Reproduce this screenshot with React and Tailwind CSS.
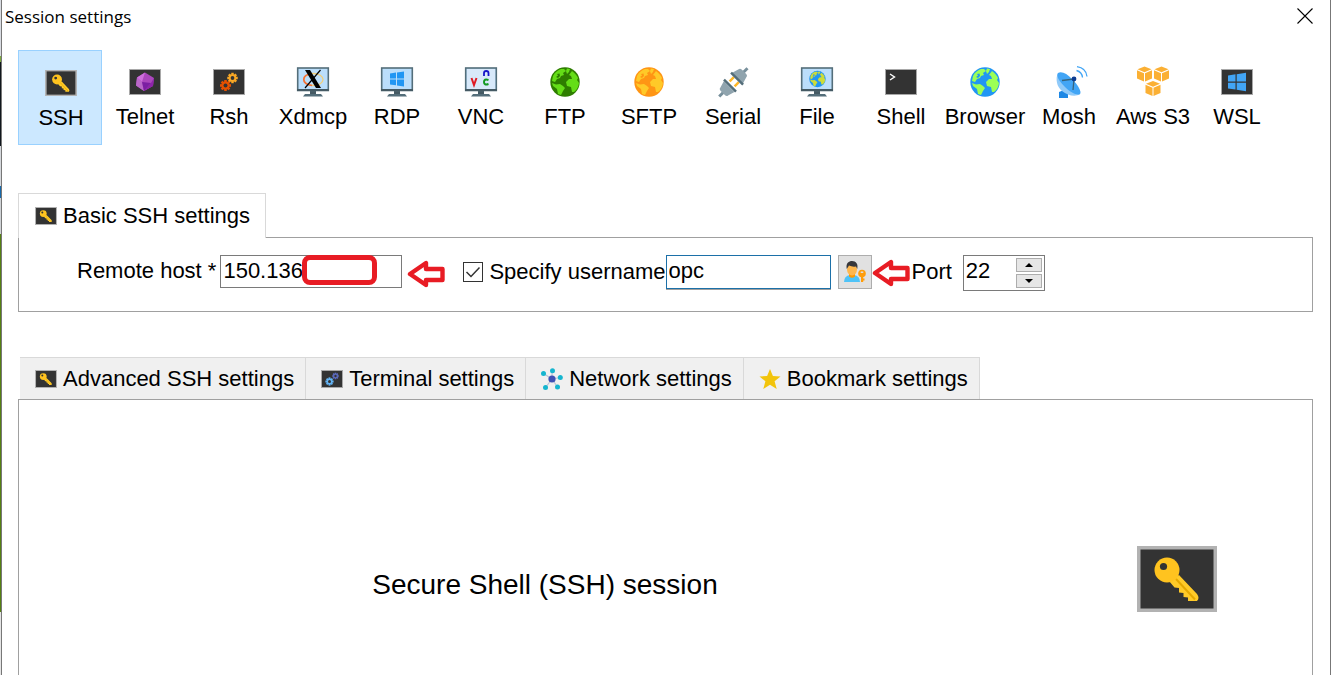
import React, { useState } from "react";

const KEY_SHAFT =
  "M42 29L60 48Q63 52 60 55L51 55L51 51.500L46.500 51L46.500 47L42 46.500L42 42L37.500 41.500L32 35Z";

function KeyIcon({ className }) {
  return (
    <svg className={className} viewBox="0 0 80 66" aria-hidden="true">
      <rect x="1.500" y="1.500" width="77" height="63" fill="#333" stroke="#b2b2b2" strokeWidth="4" />
      <path d={KEY_SHAFT} fill="#ffca28" />
      <path d="M39 33L58 53.500" stroke="#e5a800" strokeWidth="2" fill="none" />
      <circle cx="30" cy="24" r="12.500" fill="#ffc31f" />
      <circle cx="26.500" cy="20.500" r="3.600" fill="#333" />
    </svg>
  );
}

function Screen() {
  return <rect x="0.500" y="3.500" width="31" height="25" fill="#333" stroke="#a8a8a8" />;
}

function Monitor() {
  return (
    <>
      <path d="M13 25h6v4h-6z" fill="#455a64" />
      <path d="M8 28h16l2 2.500H6z" fill="#546e7a" />
      <rect x="0.700" y="2" width="30.600" height="22.500" fill="#bbdefb" stroke="#546e7a" strokeWidth="1.600" />
      <path d="M0 23h32v2H0z" fill="#455a64" />
    </>
  );
}

function Globe({ sea, land }) {
  return (
    <g>
      <circle cx="16" cy="16" r="14.700" fill={sea} />
      <path
        d="M4 10C6 6 9 4 12 3L15 3L17 5L14 7L15 9L12 10L11 12L8 13L6 16L3 15ZM3 17L7 18.500L11 18L14 20L16 22L14 25L12 29L9 28L8 23L4 20ZM18 2.500L21 3L20 6L18 8L17 5ZM23 5C26 7 28 10 29 12L28 14L30 17C29.500 21 28 24 25 26L23 26L22 21L18 20L17 16L20 13L23 13L22 10L20 9Z"
        fill={land}
      />
      <path d="M7 11L9 9.500L8 8L10.500 7.500L11 10L9 12Z" fill={sea} />
    </g>
  );
}

function Gear({ x, y, s, color, hole = "#333" }) {
  return (
    <g transform={`translate(${x} ${y}) scale(${s})`}>
      {[0, 45, 90, 135].map((a) => (
        <rect key={a} x="-1.300" y="-5.500" width="2.600" height="11" fill={color} transform={`rotate(${a})`} />
      ))}
      <circle r="4" fill={color} />
      <circle r="2" fill={hole} />
    </g>
  );
}

const Cube = ({ x, y }) => (
  <g transform={`translate(${x} ${y})`} fill="#fbb034">
    <path d="M7.500 0L14.500 2.800L7.500 5.800L0.500 2.800Z" />
    <path d="M0 3.800L7 6.800V15L0 12Z" />
    <path d="M15 3.800L8 6.800V15L15 12Z" />
  </g>
);

const drawings = {
  Telnet: (
    <>
      <Screen />
      <path d="M16 6.500L25 12L24 20L15 25L7 19.500L8 11.500Z" fill="#ab47bc" />
      <path d="M16 6.500L8 11.500L13 16Z" fill="#ce6fdc" />
      <path d="M8 11.500L13 16L15 25L7 19.500Z" fill="#ba68c8" />
      <path d="M25 12L22 17L15 25L24 20Z" fill="#8e24aa" />
      <path d="M13 16L22 17L15 25Z" fill="#7b1fa2" />
    </>
  ),
  Rsh: (
    <>
      <Screen />
      <Gear x={19.5} y={12} s={0.95} color="#f9a825" />
      <Gear x={12.5} y={19.5} s={1} color="#e65100" />
    </>
  ),
  Xdmcp: (
    <>
      <Monitor />
      <ellipse cx="16.500" cy="13.500" rx="9.500" ry="6" fill="none" stroke="#f3cf7a" strokeWidth="1.300" />
      <path d="M15 7.500C4 9 4 18 15 19.500" fill="none" stroke="#f2703a" strokeWidth="1.700" />
      <path d="M8 4h5l11 18h-5z" fill="#000" />
      <path d="M23.500 4L8 22" stroke="#000" strokeWidth="1.200" />
    </>
  ),
  RDP: (
    <>
      <Monitor />
      <path d="M9 7.500L15 6.600V12.500H9ZM16 6.500L23 5.500V12.500H16ZM9 13.500H15V19.300L9 18.500ZM16 13.500H23V20.500L16 19.500Z" fill="#2196f3" />
    </>
  ),
  VNC: (
    <>
      <Monitor />
      <rect x="2" y="3" width="28" height="20" fill="#d8e9fa" />
      <path d="M6.500 12L9 19L11.500 12" fill="none" stroke="#e01b24" strokeWidth="2" />
      <path d="M19 10V7Q19 5 21.200 5Q23.500 5 23.500 7V10" fill="none" stroke="#1515c8" strokeWidth="1.800" />
      <path d="M23.500 14Q19 12.500 19 16Q19 19.500 23.500 18" fill="none" stroke="#129a20" strokeWidth="2" />
    </>
  ),
  FTP: <Globe sea="#2e7d00" land="#64dd17" />,
  SFTP: <Globe sea="#ff9514" land="#ffc928" />,
  Serial: (
    <g transform="rotate(45 16 16)">
      <path d="M15 -4h3v6h-3zM15 30h3v6h-3z" fill="#78909c" />
      <path d="M11 3Q11 1 14 1H19Q22 1 22 3L24 10H9ZM9 22H24L22 29Q22 31 19 31H14Q11 31 11 29Z" fill="#90a4ae" />
      <path d="M12 12h2.500v6h-2.500zM19 12h2.500v6h-2.500z" fill="#ffb82a" />
      <path d="M8 9.500h17v2.500H8zM8 19.500h17v2.500H8z" fill="#546e7a" />
    </g>
  ),
  File: (
    <>
      <Monitor />
      <g transform="translate(7.500 4) scale(0.56)">
        <Globe sea="#2196f3" land="#cddc39" />
      </g>
    </>
  ),
  Shell: (
    <>
      <Screen />
      <path d="M5 8L9.500 11L5 14" fill="none" stroke="#fff" strokeWidth="1.400" />
    </>
  ),
  Browser: <Globe sea="#2196f3" land="#9cff57" />,
  Mosh: (
    <>
      <path d="M6 26L11 24L15 28V32H6Z" fill="#1e88e5" />
      <path d="M5 7C2 13 4 21 9 25C15 30 23 31 27 28Z" fill="#90caf9" />
      <path d="M5 7C9 5 14 8 19 13C25 19 29 26 27 28C24 30 17 26 12 21C6 15 3 10 5 7Z" fill="#42a5f5" />
      <path d="M9 14.500L21 13L20 24" fill="none" stroke="#37647c" strokeWidth="1.300" />
      <circle cx="21" cy="13" r="2.400" fill="#0d3c91" />
      <path d="M23.500 4.500Q29 6 29.500 11.500M24 0.700Q33 2 34 10.500" fill="none" stroke="#42a5f5" strokeWidth="1.300" />
    </>
  ),
  "Aws S3": (
    <>
      <Cube x={0} y={0.5} />
      <Cube x={17} y={0.5} />
      <Cube x={8.5} y={15} />
    </>
  ),
  WSL: (
    <>
      <Screen />
      <path d="M7 9.500L14.500 8.300V15.500H7ZM15.700 8.200L25 6.800V15.500H15.700ZM7 16.700H14.500V23.500L7 22.500ZM15.700 16.700H25V25.200L15.700 23.800Z" fill="#42a5f5" />
    </>
  ),
};

const sessionTypes = [
  "SSH", "Telnet", "Rsh", "Xdmcp", "RDP", "VNC", "FTP", "SFTP",
  "Serial", "File", "Shell", "Browser", "Mosh", "Aws S3", "WSL",
];

function SessionButton({ name, selected, onSelect }) {
  return (
    <button
      type="button"
      aria-pressed={selected}
      onClick={onSelect}
      className={
        "flex h-[95px] w-21 shrink-0 flex-col items-center pt-4 pl-0.5 leading-6 whitespace-nowrap " +
        (selected ? "border border-[#99d1ff] bg-[#cce8ff]" : "")
      }
    >
      <span className="flex h-8 w-8 items-center justify-center">
        {name === "SSH" ? (
          <KeyIcon className="h-[26px] w-8" />
        ) : (
          <svg className="h-8 w-8 overflow-visible" viewBox="0 0 32 32" aria-hidden="true">
            {drawings[name]}
          </svg>
        )}
      </span>
      <span className="mt-[7px]">{name}</span>
    </button>
  );
}

function TerminalGears() {
  return (
    <svg className="h-[18px] w-[22px]" viewBox="0 0 22 18" aria-hidden="true">
      <rect x="0.500" y="0.500" width="21" height="17" fill="#333" stroke="#a8a8a8" />
      <Gear x={14.5} y={6} s={0.6} color="#5c6bc0" />
      <Gear x={8.5} y={11.5} s={0.75} color="#64b5f6" />
    </svg>
  );
}

function NetworkIcon() {
  return (
    <svg className="h-[22px] w-[22px]" viewBox="0 0 22 22" aria-hidden="true">
      <path d="M11 11L2.500 5.500M11 11V3M11 11L19.500 9.500M11 11L16.500 19M11 11L4.500 19.500" stroke="#b9c3d6" strokeWidth="1.200" />
      <circle cx="11" cy="11" r="3.600" fill="#3f51b5" />
      <g fill="#15b5cf">
        <circle cx="2.500" cy="5.500" r="2.500" />
        <circle cx="11.500" cy="2.800" r="2.500" />
        <circle cx="19.300" cy="9.500" r="2.500" />
        <circle cx="16.500" cy="19" r="2.500" />
        <circle cx="4.500" cy="19.500" r="2.500" />
      </g>
    </svg>
  );
}

function StarIcon() {
  return (
    <svg className="h-[22px] w-[22px]" viewBox="0 0 22 22" aria-hidden="true">
      <path d="M11 1L13.900 8.100L21.500 8.500L15.600 13.300L17.700 21L11 16.700L4.300 21L6.400 13.300L0.500 8.500L8.100 8.100Z" fill="#f2c40c" />
    </svg>
  );
}

function UserKeyIcon() {
  return (
    <svg className="h-[22px] w-[22px] overflow-visible" viewBox="0 0 22 22" aria-hidden="true">
      <path d="M0 21Q0 15 6 14H10Q16 15 16 21Z" fill="#4fc3f7" />
      <path d="M5 12h6v3.500q-3 2.500-6 0z" fill="#ff9800" />
      <ellipse cx="8" cy="8.500" rx="5" ry="6" fill="#ffb74d" />
      <path d="M2.800 8C1.500 2 5 0 8 0C12 0 14.500 3 13.200 8L12 5.500Q8 6 5 4.500Z" fill="#37373b" />
      <circle cx="18" cy="12.500" r="3.800" fill="#ff9d0a" />
      <path d="M16.700 10.500h2.600v1.500h-2.600z" fill="#dedede" />
      <path d="M17 15h2.200v6H17zM19 17.500h1.500v2H19z" fill="#ff9d0a" />
    </svg>
  );
}

function RedArrow({ className }) {
  return (
    <svg className={className} viewBox="0 0 38 28" aria-hidden="true">
      <path d="M3 14L19 3V9H35.500V20H19V25Z" fill="#fff" stroke="#e81c24" strokeWidth="4.400" strokeLinejoin="round" />
    </svg>
  );
}

const advancedTabs = [
  { label: "Advanced SSH settings", icon: <KeyIcon className="h-[18px] w-[22px]" /> },
  { label: "Terminal settings", icon: <TerminalGears /> },
  { label: "Network settings", icon: <NetworkIcon /> },
  { label: "Bookmark settings", icon: <StarIcon /> },
];

export default function App() {
  const [session, setSession] = useState("SSH");
  const [host, setHost] = useState("150.136");
  const [useName, setUseName] = useState(true);
  const [user, setUser] = useState("opc");
  const [port, setPort] = useState(22);

  return (
    <div className="flex h-screen overflow-hidden bg-white font-['Liberation_Sans',Arial,sans-serif] text-[22px] leading-6 text-black">
      <div className="flex w-0.5 shrink-0 flex-col border-r border-[#777]" aria-hidden="true">
        <div className="h-14 bg-[#d9dce2]" />
        <div className="h-1.5 bg-[#7ca83f]" />
        <div className="h-21 bg-[#10161c]" />
        <div className="h-10 bg-[#d5d8dc]" />
        <div className="h-3 bg-[#1769aa]" />
        <div className="h-9 bg-[#d0d3d6]" />
        <div className="h-[378px] bg-[#558012]" />
        <div className="flex-1 bg-[#e4e4e4]" />
      </div>

      <main className="flex min-w-0 flex-1 flex-col border-r border-[#777]">
        <header className="flex h-[50px] shrink-0 items-start justify-between pr-[17px] pl-[3px]">
          <h1 className="pt-[5px] font-['Open_Sans','Noto_Sans',sans-serif] text-[17px] leading-6">Session settings</h1>
          <button type="button" aria-label="Close" className="pt-2">
            <svg className="h-4 w-4" viewBox="0 0 16 16" aria-hidden="true">
              <path d="M0.500 0.500L15.500 15.500M15.500 0.500L0.500 15.500" stroke="#000" strokeWidth="1.100" />
            </svg>
          </button>
        </header>

        <div className="flex flex-1 flex-col pr-[17px] pl-4">
          <nav className="flex" aria-label="Session type">
            {sessionTypes.map((name) => (
              <SessionButton key={name} name={name} selected={name === session} onSelect={() => setSession(name)} />
            ))}
          </nav>

          <section className="mt-12">
            <button
              type="button"
              className="relative -mb-px flex h-[45px] items-center gap-1.5 border border-b-0 border-[#d9d9d9] bg-white pr-[15px] pl-4 whitespace-nowrap"
            >
              <KeyIcon className="h-[18px] w-[22px]" />
              Basic SSH settings
            </button>
            <form className="flex h-[75px] items-start border border-[#a0a0a0] pt-[17px] pl-[58px] whitespace-nowrap" onSubmit={(e) => e.preventDefault()}>
              <label htmlFor="host" className="pt-1">Remote host *</label>
              <div className="relative ml-1">
                <input
                  id="host"
                  value={host}
                  onChange={(e) => setHost(e.target.value)}
                  className="block h-[33px] w-[182px] border border-[#7a7a7a] bg-white px-0.5 pb-px outline-none"
                />
                <span className="absolute top-0 left-[82px] h-[30px] w-[75px] rounded-lg border-[5px] border-[#e81c24] bg-white" />
              </div>
              <RedArrow className="mt-[5px] ml-[5px] h-7 w-[38px]" />
              <label className="ml-[18px] flex items-center gap-1.5 pt-[5px]">
                <span className="relative flex h-5 w-5">
                  <input
                    type="checkbox"
                    checked={useName}
                    onChange={(e) => setUseName(e.target.checked)}
                    className="h-5 w-5 appearance-none border border-[#333] bg-white"
                  />
                  {useName && (
                    <svg className="pointer-events-none absolute inset-0 h-5 w-5" viewBox="0 0 20 20" aria-hidden="true">
                      <path d="M3.500 10L8 14.500L16.500 5.500" fill="none" stroke="#333" strokeWidth="1.500" />
                    </svg>
                  )}
                </span>
                Specify username
              </label>
              <input
                aria-label="Username"
                value={user}
                onChange={(e) => setUser(e.target.value)}
                className="h-[34px] w-[165px] border border-[#1c70a8] bg-white px-0.5 pb-0.5 shadow-[0_1px_0_#a0a0a0] outline-none"
              />
              <button
                type="button"
                aria-label="Manage credentials"
                className="ml-[7px] flex h-[34px] w-[34px] items-center justify-center border border-[#adadad] bg-[#e1e1e1]"
              >
                <UserKeyIcon />
              </button>
              <RedArrow className="mt-1 h-7 w-[38px]" />
              <label htmlFor="port" className="ml-0.5 pt-[5px]">Port</label>
              <div className="ml-[11px] flex h-[36px] w-[82px] border border-[#7a7a7a] pr-0.5">
                <input
                  id="port"
                  value={port}
                  onChange={(e) => setPort(Number(e.target.value) || 0)}
                  className="h-[30px] w-0 flex-1 bg-white pl-0.5 outline-none"
                />
                <div className="flex w-[26px] flex-col gap-0.5 pt-0.5">
                  <button type="button" aria-label="Increase port" onClick={() => setPort(port + 1)} className="flex h-3.5 items-center justify-center border border-[#adadad] bg-[#e6e6e6]">
                    <svg className="h-1 w-2" viewBox="0 0 8 4" aria-hidden="true"><path d="M4 0L8 4H0Z" /></svg>
                  </button>
                  <button type="button" aria-label="Decrease port" onClick={() => setPort(port - 1)} className="flex h-3.5 items-center justify-center border border-[#adadad] bg-[#e6e6e6]">
                    <svg className="h-1 w-2" viewBox="0 0 8 4" aria-hidden="true"><path d="M0 0H8L4 4Z" /></svg>
                  </button>
                </div>
              </div>
            </form>
          </section>

          <section className="mt-[45px] flex flex-1 flex-col">
            <div className="ml-0.5 flex">
              {advancedTabs.map((tab) => (
                <button
                  key={tab.label}
                  type="button"
                  className="flex h-[42px] items-center gap-1.5 border-t border-r border-[#d9d9d9] bg-[#f0f0f0] pr-[11px] pl-[15px] whitespace-nowrap"
                >
                  {tab.icon}
                  {tab.label}
                </button>
              ))}
            </div>
            <div className="flex flex-1 items-start border border-b-0 border-[#a0a0a0] pt-[146px] pr-[95px]">
              <p className="mr-[66px] flex-1 pt-[23px] text-center text-[28px] leading-8">Secure Shell (SSH) session</p>
              <KeyIcon className="h-[66px] w-20" />
            </div>
          </section>
        </div>
      </main>
    </div>
  );
}
